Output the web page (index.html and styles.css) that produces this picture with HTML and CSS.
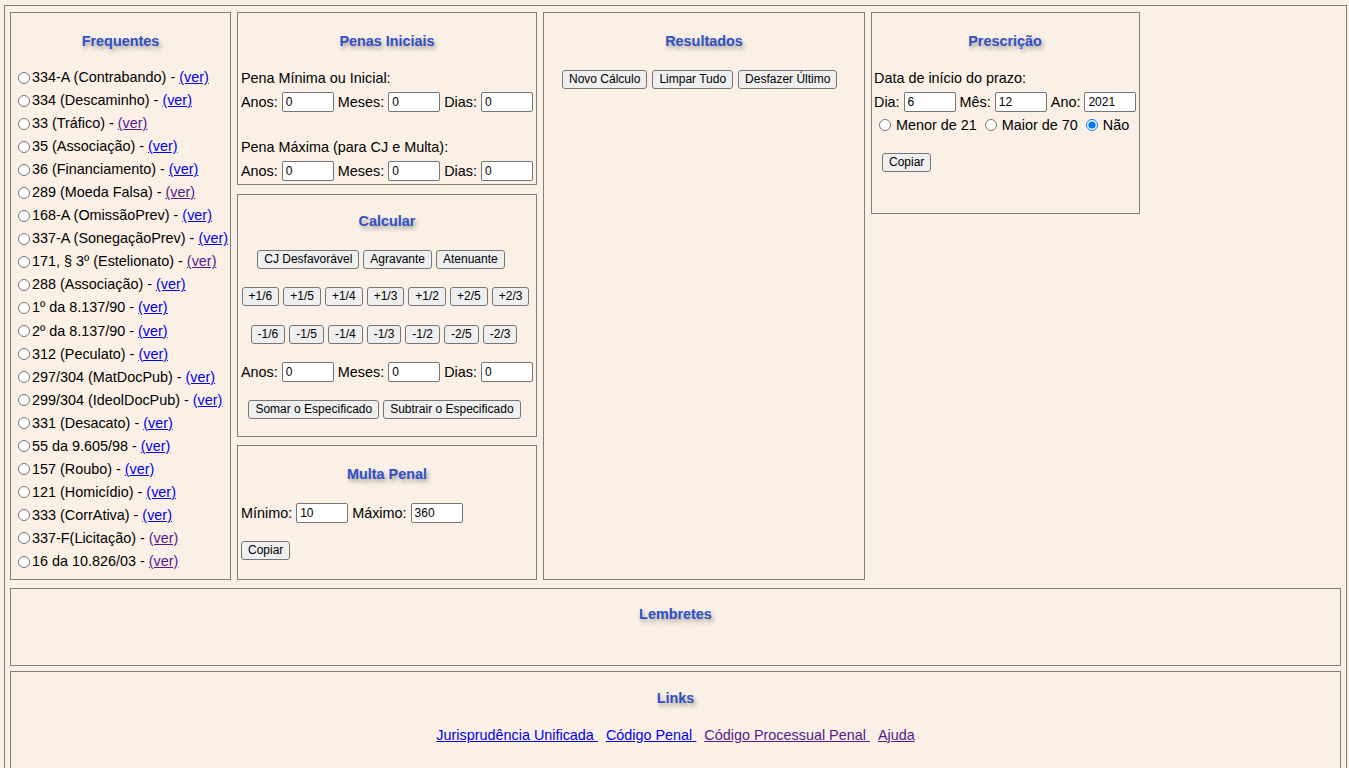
FILE: index.html
```html
<!DOCTYPE html>
<html lang="pt-BR">
<head>
<meta charset="utf-8">
<title>Calculadora de Penas</title>
<link rel="stylesheet" href="styles.css">
</head>
<body>
<div class="page">
  <div class="top">
    <section class="box freq">
      <h3 class="box-title">Frequentes</h3>
      <div class="freq-list">
        <label class="freq-item"><input type="radio" name="freq"><span>334-A (Contrabando) - <a class="link" href="#">(ver)</a></span></label>
        <label class="freq-item"><input type="radio" name="freq"><span>334 (Descaminho) - <a class="link" href="#">(ver)</a></span></label>
        <label class="freq-item"><input type="radio" name="freq"><span>33 (Tráfico) - <a class="link link--visited" href="#">(ver)</a></span></label>
        <label class="freq-item"><input type="radio" name="freq"><span>35 (Associação) - <a class="link" href="#">(ver)</a></span></label>
        <label class="freq-item"><input type="radio" name="freq"><span>36 (Financiamento) - <a class="link" href="#">(ver)</a></span></label>
        <label class="freq-item"><input type="radio" name="freq"><span>289 (Moeda Falsa) - <a class="link link--visited" href="#">(ver)</a></span></label>
        <label class="freq-item"><input type="radio" name="freq"><span>168-A (OmissãoPrev) - <a class="link" href="#">(ver)</a></span></label>
        <label class="freq-item"><input type="radio" name="freq"><span>337-A (SonegaçãoPrev) - <a class="link" href="#">(ver)</a></span></label>
        <label class="freq-item"><input type="radio" name="freq"><span>171, § 3º (Estelionato) - <a class="link link--visited" href="#">(ver)</a></span></label>
        <label class="freq-item"><input type="radio" name="freq"><span>288 (Associação) - <a class="link" href="#">(ver)</a></span></label>
        <label class="freq-item"><input type="radio" name="freq"><span>1º da 8.137/90 - <a class="link" href="#">(ver)</a></span></label>
        <label class="freq-item"><input type="radio" name="freq"><span>2º da 8.137/90 - <a class="link" href="#">(ver)</a></span></label>
        <label class="freq-item"><input type="radio" name="freq"><span>312 (Peculato) - <a class="link" href="#">(ver)</a></span></label>
        <label class="freq-item"><input type="radio" name="freq"><span>297/304 (MatDocPub) - <a class="link" href="#">(ver)</a></span></label>
        <label class="freq-item"><input type="radio" name="freq"><span>299/304 (IdeolDocPub) - <a class="link" href="#">(ver)</a></span></label>
        <label class="freq-item"><input type="radio" name="freq"><span>331 (Desacato) - <a class="link" href="#">(ver)</a></span></label>
        <label class="freq-item"><input type="radio" name="freq"><span>55 da 9.605/98 - <a class="link" href="#">(ver)</a></span></label>
        <label class="freq-item"><input type="radio" name="freq"><span>157 (Roubo) - <a class="link" href="#">(ver)</a></span></label>
        <label class="freq-item"><input type="radio" name="freq"><span>121 (Homicídio) - <a class="link" href="#">(ver)</a></span></label>
        <label class="freq-item"><input type="radio" name="freq"><span>333 (CorrAtiva) - <a class="link" href="#">(ver)</a></span></label>
        <label class="freq-item"><input type="radio" name="freq"><span>337-F(Licitação) - <a class="link link--visited" href="#">(ver)</a></span></label>
        <label class="freq-item"><input type="radio" name="freq"><span>16 da 10.826/03 - <a class="link link--visited" href="#">(ver)</a></span></label>
      </div>
    </section>

    <div class="col-mid">
      <section class="box penas">
        <h3 class="box-title">Penas Iniciais</h3>
        <div class="line penas__first">Pena Mínima ou Inicial:</div>
        <div class="field-row">
          <span>Anos:</span><input class="inp" type="text" value="0">
          <span>Meses:</span><input class="inp" type="text" value="0">
          <span>Dias:</span><input class="inp" type="text" value="0">
        </div>
        <div class="line penas__second">Pena Máxima (para CJ e Multa):</div>
        <div class="field-row">
          <span>Anos:</span><input class="inp" type="text" value="0">
          <span>Meses:</span><input class="inp" type="text" value="0">
          <span>Dias:</span><input class="inp" type="text" value="0">
        </div>
      </section>

      <section class="box calc">
        <h3 class="box-title box-title--tight">Calcular</h3>
        <div class="btn-row btn-row--center calc__cj">
          <button class="btn" type="button">CJ Desfavorável</button>
          <button class="btn" type="button">Agravante</button>
          <button class="btn" type="button">Atenuante</button>
        </div>
        <div class="btn-row btn-row--center calc__plus">
          <button class="btn" type="button">+1/6</button>
          <button class="btn" type="button">+1/5</button>
          <button class="btn" type="button">+1/4</button>
          <button class="btn" type="button">+1/3</button>
          <button class="btn" type="button">+1/2</button>
          <button class="btn" type="button">+2/5</button>
          <button class="btn" type="button">+2/3</button>
        </div>
        <div class="btn-row btn-row--center calc__minus">
          <button class="btn" type="button">-1/6</button>
          <button class="btn" type="button">-1/5</button>
          <button class="btn" type="button">-1/4</button>
          <button class="btn" type="button">-1/3</button>
          <button class="btn" type="button">-1/2</button>
          <button class="btn" type="button">-2/5</button>
          <button class="btn" type="button">-2/3</button>
        </div>
        <div class="field-row calc__fields">
          <span>Anos:</span><input class="inp" type="text" value="0">
          <span>Meses:</span><input class="inp" type="text" value="0">
          <span>Dias:</span><input class="inp" type="text" value="0">
        </div>
        <div class="btn-row btn-row--center calc__sum">
          <button class="btn" type="button">Somar o Especificado</button>
          <button class="btn" type="button">Subtrair o Especificado</button>
        </div>
      </section>

      <section class="box multa">
        <h3 class="box-title">Multa Penal</h3>
        <div class="field-row multa__fields">
          <span>Mínimo:</span><input class="inp" type="text" value="10">
          <span>Máximo:</span><input class="inp" type="text" value="360">
        </div>
        <div class="btn-row multa__copy">
          <button class="btn" type="button">Copiar</button>
        </div>
      </section>
    </div>

    <section class="box result">
      <h3 class="box-title">Resultados</h3>
      <div class="btn-row result__actions">
        <button class="btn" type="button">Novo Cálculo</button>
        <button class="btn" type="button">Limpar Tudo</button>
        <button class="btn" type="button">Desfazer Último</button>
      </div>
    </section>

    <section class="box presc">
      <h3 class="box-title">Prescrição</h3>
      <div class="line presc__label">Data de início do prazo:</div>
      <div class="field-row">
        <span>Dia:</span><input class="inp" type="text" value="6">
        <span>Mês:</span><input class="inp" type="text" value="12">
        <span>Ano:</span><input class="inp" type="text" value="2021">
      </div>
      <div class="radio-row">
        <label class="radio-opt"><input type="radio" name="idade"><span>Menor de 21</span></label>
        <label class="radio-opt"><input type="radio" name="idade"><span>Maior de 70</span></label>
        <label class="radio-opt"><input type="radio" name="idade" checked><span>Não</span></label>
      </div>
      <div class="btn-row presc__copy">
        <button class="btn" type="button">Copiar</button>
      </div>
    </section>
  </div>

  <section class="box lemb">
    <h3 class="box-title lemb__title">Lembretes</h3>
  </section>

  <section class="box links">
    <h3 class="box-title links__title">Links</h3>
    <div class="links__row">
      <a class="link" href="#">Jurisprudência Unificada&nbsp;</a>
      <a class="link" href="#">Código Penal&nbsp;</a>
      <a class="link link--visited" href="#">Código Processual Penal&nbsp;</a>
      <a class="link link--visited" href="#">Ajuda</a>
    </div>
  </section>
</div>
</body>
</html>
```

FILE: styles.css
```css
html, body {
  background: #faf0e6;
}

body {
  margin: 0;
  font-family: "Liberation Sans", Arial, sans-serif;
  font-size: 14.4px;
  color: #000;
}

.page {
  margin: 5px 2px 0 4px;
  border: 1px solid #808080;
  padding: 6px 5px 0 5px;
}

.top {
  display: flex;
  align-items: stretch;
  gap: 6px;
}

.box {
  box-sizing: border-box;
  border: 1px solid #808080;
  padding: 0 3px;
}

.box-title {
  margin: 16.5px 0 0;
  line-height: 23px;
  height: 23px;
  font-size: 14.4px;
  font-weight: bold;
  text-align: center;
  color: #2f50c6;
  text-shadow: 2px 3px 4px rgba(0, 0, 0, 0.35);
}

.box-title--tight {
  margin-top: 14.5px;
}

.link {
  color: #0000ee;
  text-decoration: underline;
}

.link--visited {
  color: #551a8b;
}

/* generic rows */
.line {
  display: flex;
  align-items: center;
  height: 23px;
  white-space: nowrap;
}

.field-row {
  display: flex;
  align-items: center;
  gap: 4px;
  height: 24px;
  white-space: nowrap;
}

.btn-row {
  display: flex;
  align-items: center;
  gap: 4px;
  height: 23px;
  white-space: nowrap;
}

.btn-row--center {
  justify-content: center;
}

.inp {
  box-sizing: border-box;
  width: 52px;
  height: 20px;
  margin: 0;
  padding: 1px 3px;
  border: 1px solid #767676;
  border-radius: 2px;
  background: #fff;
  font-family: "Liberation Sans", Arial, sans-serif;
  font-size: 12px;
  color: #000;
}

.btn {
  box-sizing: border-box;
  height: 19px;
  margin: 0;
  padding: 0 6px;
  border: 1px solid #767676;
  border-radius: 3px;
  background: #efefef;
  font-family: "Liberation Sans", Arial, sans-serif;
  font-size: 12px;
  line-height: 17px;
  color: #000;
}

/* Frequentes */
.freq {
  width: 221px;
  flex: none;
  padding-bottom: 6px;
}

.freq-list {
  margin-top: 13px;
}

.freq-item {
  display: flex;
  align-items: center;
  height: 23.05px;
  white-space: nowrap;
}

.freq-item input {
  width: 12px;
  height: 12px;
  margin: 1px 2px 0 4px;
  flex: none;
}

/* middle column */
.col-mid {
  width: 300px;
  flex: none;
  display: flex;
  flex-direction: column;
}

.penas {
  margin-bottom: 9px;
  padding-bottom: 1.5px;
}

.penas__first {
  margin-top: 14px;
}

.penas__second {
  margin-top: 22px;
}

.calc {
  margin-bottom: 8px;
  padding-bottom: 15px;
}

.calc__cj {
  margin-top: 15px;
  padding-right: 12px;
}

.calc__plus {
  margin-top: 14.5px;
  padding-right: 3px;
}

.calc__minus {
  margin-top: 14.5px;
  padding-right: 6px;
}

.calc__fields {
  margin-top: 14.5px;
}

.calc__sum {
  margin-top: 14px;
  padding-right: 5px;
}

.multa {
  flex: 1;
}

.multa__fields {
  margin-top: 15px;
}

.multa__copy {
  margin-top: 14px;
}

/* Resultados */
.result {
  width: 322px;
  flex: none;
}

.result__actions {
  margin-top: 15px;
  padding-left: 15px;
  gap: 5px;
}

/* Prescrição */
.presc {
  width: 269px;
  flex: none;
  align-self: flex-start;
  padding: 0 3px 39px 2px;
}

.presc__label {
  margin-top: 14px;
}

.radio-row {
  display: flex;
  align-items: center;
  height: 22px;
  white-space: nowrap;
}

.radio-opt {
  display: flex;
  align-items: center;
}

.radio-opt input {
  width: 12px;
  height: 12px;
  margin: 0 5px 0 5px;
}

.radio-opt + .radio-opt input {
  margin-left: 8px;
}

.presc__copy {
  margin-top: 15.5px;
  padding-left: 8px;
}

/* Lembretes / Links */
.lemb {
  margin-top: 8px;
  padding-bottom: 38.5px;
}

.lemb__title {
  margin-top: 14.5px;
}

.links {
  margin-top: 5px;
  padding-bottom: 40px;
}

.links__title {
  margin-top: 15.5px;
}

.links__row {
  display: flex;
  justify-content: center;
  align-items: center;
  gap: 8px;
  height: 23px;
  margin-top: 13px;
  white-space: nowrap;
}
```
